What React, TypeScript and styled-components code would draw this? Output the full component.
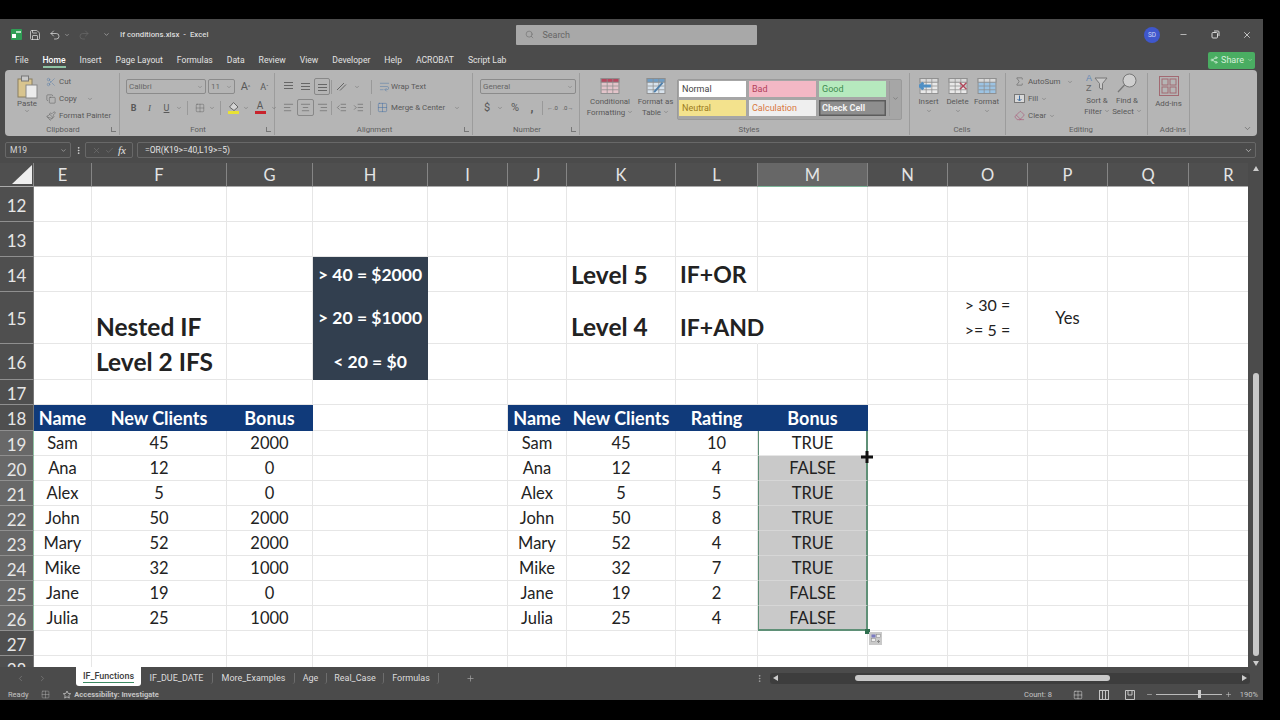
import { FC, ReactNode } from 'react';
import styled, { createGlobalStyle } from 'styled-components';
import {
  AlignCenter,
  AlignLeft,
  AlignRight,
  ChevronDown,
  ChevronLeft,
  ChevronRight,
  Check,
  Copy,
  Eraser,
  Grid2x2,
  IndentDecrease,
  IndentIncrease,
  Minus,
  MoreVertical,
  Paintbrush,
  Plus,
  Redo2,
  Save,
  Scissors,
  Search,
  Share2,
  Sigma,
  Undo2,
  WrapText,
  X,
} from 'lucide-react';

const GlobalStyle = createGlobalStyle`
  html, body {
    background: #000;
    height: 720px;
    margin: 0;
    overflow: hidden;
  }
`;

const UI_FONT = `Roboto, "Open Sans", sans-serif`;
const SHEET_FONT = `Lato, "Open Sans", sans-serif`;

const Screen = styled.div`
  background: #000;
  box-sizing: border-box;
  height: 720px;
  padding: 19px 17px 20px 0;
  width: 1280px;
`;

const Excel = styled.div`
  background: #4b4b4b;
  color: #e6e6e6;
  display: flex;
  flex-direction: column;
  font-family: ${UI_FONT};
  height: 681px;
  overflow: hidden;
  width: 1263px;
`;

/* title bar */

const TitleBar = styled.header`
  align-items: center;
  display: flex;
  flex: none;
  height: 31px;
  padding-left: 10px;
`;

const Slot = styled.span<{ $w: number; $dim?: boolean; $color?: string }>`
  align-items: center;
  color: ${({ $color, $dim }) => $color ?? ($dim ? '#6a6a6a' : 'inherit')};
  display: inline-flex;
  flex: none;
  justify-content: center;
  width: ${({ $w }) => $w}px;
`;

const DocTitle = styled.span`
  color: #dcdcdc;
  font-size: 7.8px;
  font-weight: 500;
  margin-left: 4px;
  white-space: pre;
  width: 397px;
`;

const SearchBox = styled.div`
  align-items: center;
  background: #a8a8a8;
  border-radius: 1px;
  color: #666;
  display: flex;
  font-size: 9px;
  gap: 8px;
  height: 20px;
  padding-left: 9px;
  width: 232px;
`;

const Avatar = styled.span`
  align-items: center;
  background: #3f57cc;
  border-radius: 50%;
  color: #cfd6f5;
  display: flex;
  font-size: 6.5px;
  height: 16px;
  justify-content: center;
  margin-left: 387px;
  width: 16px;
`;

const WindowButtons = styled.div`
  align-items: center;
  color: #d8d8d8;
  display: flex;
  margin-left: 8px;
`;

/* tabs */

const MenuBar = styled.nav`
  align-items: center;
  display: flex;
  flex: none;
  font-size: 8.6px;
  height: 20px;
  justify-content: space-between;
  padding: 0 8px 0 15px;
`;

const MenuItems = styled.div`
  align-items: center;
  display: flex;
  gap: 14px;
`;

const MenuItem = styled.span<{ $active?: boolean }>`
  border-bottom: 2px solid ${({ $active }) => ($active ? '#8fc3a4' : 'transparent')};
  color: ${({ $active }) => ($active ? '#fff' : '#e2e2e2')};
  font-weight: ${({ $active }) => ($active ? 500 : 400)};
  padding: 2px 0 1px;
`;

const ShareButton = styled.span`
  align-items: center;
  background: #4aad62;
  border-radius: 2px;
  color: #d6f0dc;
  display: flex;
  font-size: 9px;
  gap: 3px;
  height: 17px;
  justify-content: center;
  width: 47px;
`;

/* ribbon */

const Ribbon = styled.div`
  background: #b5b5b5;
  border-radius: 4px;
  box-sizing: border-box;
  color: #585858;
  display: flex;
  flex: none;
  font-size: 7.9px;
  height: 66px;
  margin: 0 6px 0 5px;
  padding-top: 3px;
`;

const Group = styled.section<{ $w: number }>`
  border-right: 1px solid #9c9c9c;
  box-sizing: border-box;
  display: flex;
  flex: none;
  flex-direction: column;
  height: 62px;
  width: ${({ $w }) => $w}px;
`;

const GroupBody = styled.div<{ $pad?: string; $col?: boolean }>`
  display: flex;
  flex: 1;
  flex-direction: ${({ $col }) => ($col ? 'column' : 'row')};
  gap: ${({ $col }) => ($col ? '6px' : '0')};
  min-height: 0;
  padding: ${({ $pad }) => $pad ?? '0'};
`;

const GroupFoot = styled.footer`
  align-items: center;
  color: #5e5e5e;
  display: flex;
  flex: none;
  font-size: 7.8px;
  height: 11px;
  padding: 0 1px 0 10px;
`;

const FootLabel = styled.span`
  flex: 1;
  text-align: center;
`;

const Launcher = styled.span`
  border-bottom: 1px solid #777;
  border-left: 1px solid #777;
  height: 4px;
  margin-right: 2px;
  width: 4px;
`;

const ToolRow = styled.div<{ $gap?: number }>`
  align-items: center;
  display: flex;
  gap: ${({ $gap }) => $gap ?? 0}px;
  height: 15px;
`;

const SelectBox = styled.span<{ $w: number }>`
  align-items: center;
  border: 1px solid #8b8b8b;
  border-radius: 2px;
  box-sizing: border-box;
  color: #666;
  display: flex;
  font-size: 8px;
  height: 15px;
  justify-content: space-between;
  padding: 0 2px;
  width: ${({ $w }) => $w}px;
`;

const Divider = styled.span<{ $m?: number }>`
  background: #999;
  flex: none;
  height: 14px;
  margin: 0 ${({ $m }) => $m ?? 0}px;
  width: 1px;
`;

const Active = styled.span`
  align-items: center;
  border: 1px solid #888;
  border-radius: 2px;
  display: inline-flex;
  height: 15px;
  justify-content: center;
  width: 15px;
`;

const Glyph = styled.span<{ $bold?: boolean; $italic?: boolean; $size?: number; $under?: boolean; $serif?: boolean }>`
  font-family: ${({ $serif }) => ($serif ? '"Liberation Serif", serif' : 'inherit')};
  font-size: ${({ $size }) => $size ?? 9}px;
  font-style: ${({ $italic }) => ($italic ? 'italic' : 'normal')};
  font-weight: ${({ $bold }) => ($bold ? 700 : 400)};
  text-decoration: ${({ $under }) => ($under ? 'underline' : 'none')};
`;

const ColorChip = styled.span<{ $color: string }>`
  align-items: center;
  display: inline-flex;
  flex-direction: column;
  font-size: 10px;
  line-height: 10px;
  &::after {
    background: ${({ $color }) => $color};
    content: '';
    display: block;
    height: 3px;
    width: 11px;
  }
`;

const PasteButton = styled.div`
  align-items: center;
  display: flex;
  flex: none;
  flex-direction: column;
  margin-left: 3px;
  padding-top: 2px;
  width: 38px;
`;

const SmallList = styled.div<{ $w?: number }>`
  display: flex;
  flex: none;
  flex-direction: column;
  width: ${({ $w }) => ($w ? `${$w}px` : 'auto')};
`;

const SmallItem = styled.div`
  align-items: center;
  display: flex;
  gap: 3px;
  height: 17px;
  white-space: nowrap;
`;

const BigButton = styled.div<{ $w: number }>`
  align-items: center;
  display: flex;
  flex: none;
  flex-direction: column;
  line-height: 10.5px;
  text-align: center;
  white-space: nowrap;
  width: ${({ $w }) => $w}px;
  svg.big {
    flex: none;
    margin-bottom: 3px;
  }
`;

const WideLabel = styled.span`
  align-items: center;
  display: flex;
  gap: 4px;
  margin-left: 1px;
  white-space: nowrap;
`;

const Gallery = styled.div`
  background: #a6a6a6;
  border: 1px solid #9a9a9a;
  border-radius: 2px;
  box-sizing: border-box;
  display: grid;
  flex: none;
  gap: 3px;
  grid-template-columns: 67px 67px 67px 1fr;
  grid-template-rows: 16px 16px;
  height: 41px;
  margin-top: 1px;
  padding: 1px;
  width: 225px;
`;

const StyleCell = styled.span<{ $bg: string; $fg: string; $strong?: boolean }>`
  align-items: center;
  background: ${({ $bg }) => $bg};
  box-shadow: ${({ $strong }) => ($strong ? 'inset 0 0 0 1.5px #5c5c5c' : 'none')};
  color: ${({ $fg }) => $fg};
  display: flex;
  font-size: 9px;
  font-weight: ${({ $strong }) => ($strong ? 700 : 400)};
  padding-left: 3px;
`;

const GalleryMore = styled.span`
  align-items: center;
  border-left: 1px solid #999;
  display: flex;
  grid-column: 4;
  grid-row: 1 / span 2;
  justify-content: center;
`;

const Collapse = styled.div`
  align-items: flex-end;
  display: flex;
  flex: 1;
  justify-content: flex-end;
  padding: 0 5px 3px 0;
`;

/* formula bar */

const FormulaBar = styled.div`
  align-items: center;
  display: flex;
  flex: none;
  height: 16px;
  margin-top: 6px;
  padding: 0 7px 0 5px;
`;

const NameBox = styled.span`
  align-items: center;
  border: 1px solid #686868;
  border-radius: 2px;
  box-sizing: border-box;
  color: #d4d4d4;
  display: flex;
  font-size: 8.5px;
  height: 16px;
  justify-content: space-between;
  padding: 0 3px 0 4px;
  width: 66px;
`;

const FxBox = styled.span`
  align-items: center;
  border: 1px solid #686868;
  border-radius: 2px;
  box-sizing: border-box;
  display: flex;
  gap: 4px;
  height: 16px;
  justify-content: center;
  margin-right: 4px;
  width: 48px;
`;

const FormulaInput = styled.span`
  align-items: center;
  border: 1px solid #686868;
  border-radius: 2px;
  box-sizing: border-box;
  color: #e4e4e4;
  display: flex;
  flex: 1;
  font-size: 8.5px;
  height: 16px;
  justify-content: space-between;
  padding: 0 2px 0 7px;
`;

/* sheet */

const SheetRow = styled.div`
  display: flex;
  flex: none;
  height: 504px;
  margin-top: 5px;
`;

const SheetWrap = styled.div`
  height: 504px;
  overflow: hidden;
  position: relative;
  width: 1248px;
`;

const SheetGrid = styled.div<{ $cols: string; $rows: string }>`
  display: grid;
  font-family: ${SHEET_FONT};
  grid-template-columns: ${({ $cols }) => $cols};
  grid-template-rows: ${({ $rows }) => $rows};
`;

const Corner = styled.div`
  align-items: flex-end;
  background: #4f4f4f;
  border-bottom: 1px solid #aaa;
  border-right: 1px solid #8a8a8a;
  box-sizing: border-box;
  display: flex;
  justify-content: flex-end;
  padding: 0 1px 2px 0;
`;

const ColHead = styled.div<{ $on?: boolean }>`
  align-items: center;
  background: ${({ $on }) => ($on ? '#676767' : '#4f4f4f')};
  border-bottom: ${({ $on }) => ($on ? '1px solid #7fb79b' : '1px solid #aaa')};
  border-right: 1px solid #858585;
  box-sizing: border-box;
  color: #e4e4e4;
  display: flex;
  font-family: ${SHEET_FONT};
  font-size: 16.5px;
  justify-content: center;
`;

const RowHead = styled.div<{ $on?: boolean }>`
  align-items: center;
  background: ${({ $on }) => ($on ? '#686868' : '#4f4f4f')};
  border-bottom: 1px solid #8f8f8f;
  border-right: ${({ $on }) => ($on ? '1px solid #8fc3a4' : '1px solid #777')};
  box-sizing: border-box;
  color: #e6e6e6;
  display: flex;
  font-family: ${SHEET_FONT};
  font-size: 17px;
  justify-content: center;
  padding-top: 2px;
`;

type CellKind = 'head' | 'note' | 'title' | 'caps' | 'selected' | 'selectedTop' | 'selectedEnd';

const isSelection = (kind?: CellKind) =>
  kind === 'selected' || kind === 'selectedTop' || kind === 'selectedEnd';

const cellSize = (kind?: CellKind) => {
  if (kind === 'title') return 24.5;
  if (kind === 'caps') return 23;
  if (kind === 'head') return 18;
  if (kind === 'note') return 17.5;
  return 16.5;
};

const Cell = styled.div<{
  $kind?: CellKind;
  $left?: boolean;
  $bottom?: boolean;
  $open?: boolean;
}>`
  align-items: ${({ $bottom }) => ($bottom ? 'flex-end' : 'center')};
  background: ${({ $kind }) =>
    $kind === 'head'
      ? '#103a7a'
      : $kind === 'note'
        ? '#323f4f'
        : $kind === 'selected' || $kind === 'selectedEnd'
          ? '#c9c9c9'
          : '#fff'};
  border-bottom: ${({ $kind }) => ($kind === 'selectedEnd' ? '2px' : '1px')} solid
    ${({ $kind }) =>
      $kind === 'head' || $kind === 'note'
        ? 'transparent'
        : $kind === 'selectedEnd'
          ? '#5f9077'
          : $kind === 'selected'
            ? '#d6d6d6'
            : '#e6e6e6'};
  border-left: ${({ $kind }) => (isSelection($kind) ? '1.5px solid #5f9077' : '0')};
  border-right: ${({ $kind }) => (isSelection($kind) ? '2px' : '1px')} solid
    ${({ $kind, $open }) =>
      isSelection($kind)
        ? '#5f9077'
        : $kind === 'head' || $kind === 'note' || $open
          ? 'transparent'
          : '#e6e6e6'};
  box-sizing: border-box;
  color: ${({ $kind }) => ($kind === 'head' || $kind === 'note' ? '#fff' : '#222')};
  display: flex;
  font-size: ${({ $kind }) => cellSize($kind)}px;
  font-weight: ${({ $kind }) =>
    $kind === 'head' || $kind === 'note' || $kind === 'title' || $kind === 'caps' ? 700 : 400};
  justify-content: ${({ $left }) => ($left ? 'flex-start' : 'center')};
  padding-bottom: ${({ $bottom }) => ($bottom ? '2px' : '0')};
  padding-left: ${({ $left }) => ($left ? '4px' : '0')};
  position: ${({ $open }) => ($open ? 'relative' : 'static')};
  white-space: nowrap;
  z-index: ${({ $open }) => ($open ? 1 : 'auto')};
`;

const StackedNote = styled.span`
  display: flex;
  flex-direction: column;
  font-size: 16px;
  gap: 7px;
  line-height: 18px;
`;

const FillHandle = styled.span`
  background: #2f6f4f;
  height: 5px;
  left: 865px;
  position: absolute;
  top: 466px;
  width: 5px;
`;

const CrossCursor = styled.svg`
  left: 861px;
  position: absolute;
  top: 288px;
`;

const AutofillTag = styled.span`
  align-items: center;
  background: #c9c9c9;
  display: flex;
  height: 13px;
  justify-content: center;
  left: 869px;
  position: absolute;
  top: 469px;
  width: 13px;
`;

const VScroll = styled.div`
  align-items: center;
  background: #4b4b4b;
  box-sizing: border-box;
  display: flex;
  flex-direction: column;
  height: 504px;
  justify-content: space-between;
  padding: 3px 0 1px;
  width: 15px;
`;

const VTrack = styled.div`
  display: flex;
  flex: 1;
  flex-direction: column;
  justify-content: flex-end;
  padding-bottom: 5px;
`;

const VThumb = styled.span`
  background: #c8c8c8;
  border-radius: 3px;
  display: block;
  height: 283px;
  width: 6px;
`;

const Arrow = styled.span<{ $dir: 'up' | 'down' | 'left' | 'right' }>`
  flex: none;
  height: 0;
  width: 0;
  ${({ $dir }) =>
    $dir === 'up'
      ? 'border-left:3px solid transparent;border-right:3px solid transparent;border-bottom:5px solid #ccc;'
      : $dir === 'down'
        ? 'border-left:3px solid transparent;border-right:3px solid transparent;border-top:5px solid #ccc;'
        : $dir === 'left'
          ? 'border-top:3px solid transparent;border-bottom:3px solid transparent;border-right:5px solid #ccc;'
          : 'border-top:3px solid transparent;border-bottom:3px solid transparent;border-left:5px solid #ccc;'}
`;

/* sheet tabs */

const TabBar = styled.div`
  align-items: center;
  display: flex;
  flex: none;
  font-size: 9px;
  height: 22px;
`;

const TabNav = styled.div`
  align-items: center;
  box-sizing: border-box;
  color: #7a7a7a;
  display: flex;
  gap: 13px;
  padding-left: 16px;
  width: 76px;
`;

const SheetTab = styled.span<{ $active?: boolean; $w: number }>`
  align-items: center;
  align-self: ${({ $active }) => ($active ? 'flex-start' : 'center')};
  background: ${({ $active }) => ($active ? '#fff' : 'transparent')};
  border-radius: 0 0 3px 3px;
  border-right: ${({ $active }) => ($active ? '0' : '1px solid #6d6d6d')};
  box-sizing: border-box;
  color: ${({ $active }) => ($active ? '#3c3c3c' : '#dcdcdc')};
  display: flex;
  flex: none;
  font-weight: ${({ $active }) => ($active ? 500 : 400)};
  height: ${({ $active }) => ($active ? '19px' : '11px')};
  justify-content: center;
  width: ${({ $w }) => $w}px;
`;

const TabLabel = styled.span<{ $active?: boolean }>`
  border-bottom: ${({ $active }) => ($active ? '1.5px solid #3d8a63' : '0')};
  line-height: 11px;
`;

const HScrollArea = styled.div`
  align-items: center;
  background: #3d3d3d;
  border-radius: 3px;
  box-sizing: border-box;
  display: flex;
  height: 11px;
  justify-content: space-between;
  margin-left: 5px;
  padding: 0 3px;
  width: 480px;
`;

const HThumb = styled.span`
  background: #c8c8c8;
  border-radius: 3px;
  height: 6px;
  margin-left: 77px;
  margin-right: auto;
  width: 255px;
`;

/* status bar */

const StatusBar = styled.footer`
  align-items: center;
  color: #c4c4c4;
  display: flex;
  flex: 1;
  font-size: 7.5px;
  padding: 0 5px 0 8px;
`;

const StatusStrong = styled.span`
  font-weight: 700;
`;

const StatusGap = styled.span`
  flex: 1;
`;

const SliderTrack = styled.span`
  background: #bbb;
  display: block;
  flex: none;
  height: 1px;
  margin: 0 3px;
  position: relative;
  width: 66px;
  &::after {
    background: #ccc;
    content: '';
    height: 8px;
    left: 42px;
    position: absolute;
    top: -4px;
    width: 3px;
  }
`;

const Chev: FC<{ size?: number }> = ({ size = 7 }) => <ChevronDown size={size} strokeWidth={1.6} />;

const TableIcon: FC<{ head?: string; mid?: string; x?: ReactNode }> = ({ head = '#d9d9d9', mid = '#e8e8e8', x }) => (
  <svg className="big" width="20" height="16" viewBox="0 0 20 17">
    <rect x="0.5" y="0.5" width="19" height="16" fill={mid} stroke="#8e8e8e" />
    <rect x="0.5" y="0.5" width="19" height="4" fill={head} stroke="#8e8e8e" />
    <path d="M7 1v15M13 1v15M1 8.5h18M1 12.5h18" stroke="#8e8e8e" strokeWidth="0.8" />
    {x}
  </svg>
);

const AddinsIcon = () => (
  <svg className="big" width="20" height="20" viewBox="0 0 20 20" fill="none" stroke="#a26a72">
    <rect x="0.5" y="0.5" width="19" height="19" />
    <rect x="3" y="3" width="6" height="6" />
    <rect x="11" y="3" width="6" height="6" />
    <rect x="3" y="11" width="6" height="6" />
    <rect x="11" y="11" width="6" height="6" />
  </svg>
);

const PasteIcon = () => (
  <svg width="21" height="24" viewBox="0 0 21 24">
    <rect x="1" y="4" width="14" height="18" fill="#d8c48e" stroke="#8a7f60" />
    <rect x="4.5" y="1" width="7" height="5" fill="#c9c9c9" stroke="#777" />
    <rect x="9" y="10" width="11" height="13" fill="#ececec" stroke="#888" />
  </svg>
);

const SortIcon = () => (
  <svg className="big" width="22" height="20" viewBox="0 0 22 20">
    <text x="0" y="8" fontSize="9" fill="#5f86b5" fontFamily="Liberation Sans">A</text>
    <text x="0" y="18" fontSize="9" fill="#666" fontFamily="Liberation Sans">Z</text>
    <path d="M9 5h12l-4.5 5.5v6l-3-1.5v-4.500z" fill="#c9c9c9" stroke="#777" />
  </svg>
);

const FindIcon = () => (
  <svg className="big" width="22" height="20" viewBox="0 0 22 20">
    <circle cx="13.5" cy="7.500" r="6.500" fill="#cfcfcf" stroke="#777" />
    <path d="M8.500 12L2 19" stroke="#777" strokeWidth="1.300" />
  </svg>
);

const TopLines: FC<{ at: number }> = ({ at }) => (
  <svg width="11" height="11" viewBox="0 0 11 11" stroke="#666">
    <path d={`M1 ${at}.5h9M1 ${at + 3}.5h9M1 ${at + 6}.5h9`} />
  </svg>
);

const FillBucket = () => (
  <ColorChip $color="#e8e234">
    <svg width="11" height="9" viewBox="0 0 11 9">
      <path d="M5.500 0.500L10 5 6 8.500 1.500 5z" fill="#d4d4d4" stroke="#666" />
    </svg>
  </ColorChip>
);

const COLUMNS: [string, number][] = [
  ['E', 58], ['F', 135], ['G', 86], ['H', 115], ['I', 80], ['J', 59], ['K', 109],
  ['L', 82], ['M', 110], ['N', 80], ['O', 80], ['P', 80], ['Q', 81], ['R', 80],
];

const ROWS: [number, number][] = [
  [12, 35], [13, 35], [14, 35], [15, 52], [16, 36], [17, 25], [18, 26], [19, 25], [20, 25], [21, 25],
  [22, 25], [23, 25], [24, 25], [25, 25], [26, 25], [27, 25], [28, 25],
];

const LEFT_TABLE: [string, number, number][] = [
  ['Sam', 45, 2000], ['Ana', 12, 0], ['Alex', 5, 0], ['John', 50, 2000],
  ['Mary', 52, 2000], ['Mike', 32, 1000], ['Jane', 19, 0], ['Julia', 25, 1000],
];

const RIGHT_TABLE: [string, number, number, string][] = [
  ['Sam', 45, 10, 'TRUE'], ['Ana', 12, 4, 'FALSE'], ['Alex', 5, 5, 'TRUE'], ['John', 50, 8, 'TRUE'],
  ['Mary', 52, 4, 'TRUE'], ['Mike', 32, 7, 'TRUE'], ['Jane', 19, 2, 'FALSE'], ['Julia', 25, 4, 'FALSE'],
];

interface CellData {
  content?: ReactNode;
  kind?: CellKind;
  left?: boolean;
  bottom?: boolean;
  open?: boolean;
}

const buildCells = () => {
  const cells: Record<string, CellData> = {
    H14: { content: '> 40 = $2000', kind: 'note' },
    H15: { content: '> 20 = $1000', kind: 'note' },
    H16: { content: '< 20 = $0', kind: 'note' },
    F15: { content: 'Nested IF', kind: 'title', left: true, bottom: true },
    F16: { content: 'Level 2 IFS', kind: 'title', left: true },
    K14: { content: 'Level 5', kind: 'title', left: true },
    L14: { content: 'IF+OR', kind: 'caps', left: true },
    K15: { content: 'Level 4', kind: 'title', left: true, bottom: true },
    L15: { content: 'IF+AND', kind: 'caps', left: true, bottom: true, open: true },
    O15: {
      content: (
        <StackedNote>
          <span>&gt; 30 =</span>
          <span>&gt;= 5 =</span>
        </StackedNote>
      ),
    },
    P15: { content: 'Yes' },
  };
  ['Name', 'New Clients', 'Bonus'].forEach((text, i) => {
    cells[`${'EFG'[i]}18`] = { content: text, kind: 'head' };
  });
  ['Name', 'New Clients', 'Rating', 'Bonus'].forEach((text, i) => {
    cells[`${'JKLM'[i]}18`] = { content: text, kind: 'head' };
  });
  LEFT_TABLE.forEach((row, r) => {
    row.forEach((value, i) => {
      cells[`${'EFG'[i]}${19 + r}`] = { content: value };
    });
  });
  RIGHT_TABLE.forEach((row, r) => {
    row.forEach((value, i) => {
      const kind: CellKind | undefined =
        i !== 3 ? undefined : r === 0 ? 'selectedTop' : r === 7 ? 'selectedEnd' : 'selected';
      cells[`${'JKLM'[i]}${19 + r}`] = { content: value, kind };
    });
  });
  return cells;
};

const CELLS = buildCells();

const SHEETS: [string, number][] = [
  ['IF_DUE_DATE', 72], ['More_Examples', 82], ['Age', 32], ['Real_Case', 57], ['Formulas', 55],
];

const MENU = ['File', 'Home', 'Insert', 'Page Layout', 'Formulas', 'Data', 'Review', 'View', 'Developer', 'Help', 'ACROBAT', 'Script Lab'];

const App: FC = () => (
  <Screen>
    <GlobalStyle />
    <Excel>
      <TitleBar>
        <Slot $w={12}>
          <svg width="11" height="11" viewBox="0 0 11 11">
            <rect width="11" height="11" rx="1" fill="#2f9e55" />
            <rect x="5" y="2" width="5" height="2" fill="#b7e2c4" />
            <rect x="1" y="5" width="4" height="4" fill="#fff" />
          </svg>
        </Slot>
        <Slot $w={26}><Save size={12} strokeWidth={1.4} /></Slot>
        <Slot $w={14}><Undo2 size={12} strokeWidth={1.4} /></Slot>
        <Slot $w={10}><Chev size={6} /></Slot>
        <Slot $w={24} $dim><Redo2 size={12} strokeWidth={1.4} /></Slot>
        <Slot $w={20}><Chev size={7} /></Slot>
        <DocTitle>If conditions.xlsx  -  Excel</DocTitle>
        <SearchBox>
          <Search size={9} strokeWidth={1.4} />
          Search
        </SearchBox>
        <Avatar>SD</Avatar>
        <WindowButtons>
          <Slot $w={31}><Minus size={9} /></Slot>
          <Slot $w={32}>
            <svg width="9" height="9" viewBox="0 0 9 9" fill="none" stroke="#d8d8d8">
              <rect x="1" y="2.500" width="5.500" height="5.500" rx="1" />
              <path d="M3 1h4a1 1 0 0 1 1 1v4" />
            </svg>
          </Slot>
          <Slot $w={32}><X size={10} /></Slot>
        </WindowButtons>
      </TitleBar>

      <MenuBar>
        <MenuItems>
          {MENU.map((item) => (
            <MenuItem key={item} $active={item === 'Home'}>{item}</MenuItem>
          ))}
        </MenuItems>
        <ShareButton>
          <Share2 size={8} />
          Share
          <Chev size={6} />
        </ShareButton>
      </MenuBar>

      <Ribbon>
        <Group $w={115}>
          <GroupBody>
            <PasteButton>
              <PasteIcon />
              <span>Paste</span>
              <Chev size={6} />
            </PasteButton>
            <SmallList>
              <SmallItem><Slot $w={10}><Scissors size={10} strokeWidth={1.2} color="#5a7ea8" /></Slot>Cut</SmallItem>
              <SmallItem><Slot $w={10}><Copy size={10} strokeWidth={1.2} /></Slot>Copy<Slot $w={20}><Chev size={6} /></Slot></SmallItem>
              <SmallItem><Slot $w={10}><Paintbrush size={10} strokeWidth={1.2} /></Slot>Format Painter</SmallItem>
            </SmallList>
          </GroupBody>
          <GroupFoot><FootLabel>Clipboard</FootLabel><Launcher /></GroupFoot>
        </Group>

        <Group $w={155}>
          <GroupBody $col $pad="6px 0 0 6px">
            <ToolRow $gap={2}>
              <SelectBox $w={80}>Calibri<Chev size={6} /></SelectBox>
              <SelectBox $w={27}>11<Chev size={6} /></SelectBox>
              <Slot $w={17}><Glyph $size={11}>A</Glyph><Glyph $size={6}>^</Glyph></Slot>
              <Slot $w={17}><Glyph $size={9}>A</Glyph><Glyph $size={6}>ˇ</Glyph></Slot>
            </ToolRow>
            <ToolRow>
              <Slot $w={15}><Glyph $bold>B</Glyph></Slot>
              <Slot $w={17}><Glyph $italic $serif>I</Glyph></Slot>
              <Slot $w={17}><Glyph $under>U</Glyph></Slot>
              <Slot $w={8}><Chev size={6} /></Slot>
              <Divider $m={4} />
              <Slot $w={16}><Grid2x2 size={10} strokeWidth={1} /></Slot>
              <Slot $w={8}><Chev size={6} /></Slot>
              <Divider $m={4} />
              <Slot $w={17}><FillBucket /></Slot>
              <Slot $w={8}><Chev size={6} /></Slot>
              <Slot $w={20}><ColorChip $color="#c8232c">A</ColorChip></Slot>
              <Slot $w={8}><Chev size={6} /></Slot>
            </ToolRow>
          </GroupBody>
          <GroupFoot><FootLabel>Font</FootLabel><Launcher /></GroupFoot>
        </Group>

        <Group $w={198}>
          <GroupBody $col $pad="6px 0 0 5px">
            <ToolRow>
              <Slot $w={17}><TopLines at={1} /></Slot>
              <Slot $w={17}><TopLines at={2} /></Slot>
              <Slot $w={16}><Active><TopLines at={3} /></Active></Slot>
              <Divider $m={1} />
              <Slot $w={16}>
                <svg width="11" height="11" viewBox="0 0 11 11" fill="none" stroke="#666"><path d="M1 9l7-7M4 9.500l6-6" /></svg>
              </Slot>
              <Slot $w={16}><Chev size={6} /></Slot>
              <Divider $m={6} />
              <Slot $w={12}><WrapText size={11} strokeWidth={1.2} color="#5a7ea8" /></Slot>
              <WideLabel>Wrap Text</WideLabel>
            </ToolRow>
            <ToolRow>
              <Slot $w={17}><AlignLeft size={11} strokeWidth={1.2} /></Slot>
              <Slot $w={17}><Active><AlignCenter size={11} strokeWidth={1.2} /></Active></Slot>
              <Slot $w={16}><AlignRight size={11} strokeWidth={1.2} /></Slot>
              <Divider $m={1} />
              <Slot $w={17}><IndentDecrease size={11} strokeWidth={1.2} /></Slot>
              <Slot $w={17}><IndentIncrease size={11} strokeWidth={1.2} /></Slot>
              <Divider $m={3} />
              <Slot $w={16}><Grid2x2 size={11} strokeWidth={1.2} color="#4b74a6" /></Slot>
              <WideLabel>Merge &amp; Center</WideLabel>
              <Slot $w={24}><Chev size={6} /></Slot>
            </ToolRow>
          </GroupBody>
          <GroupFoot><FootLabel>Alignment</FootLabel><Launcher /></GroupFoot>
        </Group>

        <Group $w={107}>
          <GroupBody $col $pad="6px 0 0 7px">
            <ToolRow><SelectBox $w={96}>General<Chev size={6} /></SelectBox></ToolRow>
            <ToolRow>
              <Slot $w={14}><Glyph $size={11}>$</Glyph></Slot>
              <Slot $w={12}><Chev size={6} /></Slot>
              <Slot $w={18}><Glyph $size={11}>%</Glyph></Slot>
              <Slot $w={16}><Glyph $size={12} $bold>,</Glyph></Slot>
              <Divider $m={2} />
              <Slot $w={15}><Glyph $size={6}>←.0</Glyph></Slot>
              <Slot $w={16}><Glyph $size={6}>.0→</Glyph></Slot>
            </ToolRow>
          </GroupBody>
          <GroupFoot><FootLabel>Number</FootLabel><Launcher /></GroupFoot>
        </Group>

        <Group $w={330}>
          <GroupBody $pad="5px 0 0 6px">
            <BigButton $w={48}>
              <TableIcon head="#b5485f" mid="#e3c4ca" />
              <span>Conditional<br />Formatting <Chev size={6} /></span>
            </BigButton>
            <BigButton $w={43}>
              <TableIcon head="#6f9dc4" mid="#d7e2ec" x={<path d="M8 15l9-10" stroke="#4f7faa" strokeWidth="2" />} />
              <span>Format as<br />Table <Chev size={6} /></span>
            </BigButton>
            <Gallery>
              <StyleCell $bg="#fff" $fg="#444">Normal</StyleCell>
              <StyleCell $bg="#f3b8c5" $fg="#b2405a">Bad</StyleCell>
              <StyleCell $bg="#b6e9be" $fg="#3f8b4f">Good</StyleCell>
              <GalleryMore><Chev size={7} /></GalleryMore>
              <StyleCell $bg="#f3e28d" $fg="#9c7c1e">Neutral</StyleCell>
              <StyleCell $bg="#efefef" $fg="#d9783f">Calculation</StyleCell>
              <StyleCell $bg="#8e8e8e" $fg="#f4f4f4" $strong>Check Cell</StyleCell>
            </Gallery>
          </GroupBody>
          <GroupFoot><FootLabel>Styles</FootLabel></GroupFoot>
        </Group>

        <Group $w={96}>
          <GroupBody $pad="5px 0 0 4px">
            <BigButton $w={29}>
              <TableIcon x={<path d="M0 8.500h12M4 5L0 8.500 4 12" stroke="#4f8fc4" strokeWidth="3" fill="none" />} />
              <span>Insert</span>
              <Chev size={6} />
            </BigButton>
            <BigButton $w={29}>
              <TableIcon x={<path d="M12 5l7 7M19 5l-7 7" stroke="#b0475a" strokeWidth="1.500" />} />
              <span>Delete</span>
              <Chev size={6} />
            </BigButton>
            <BigButton $w={29}>
              <TableIcon mid="#9cc3e3" />
              <span>Format</span>
              <Chev size={6} />
            </BigButton>
          </GroupBody>
          <GroupFoot><FootLabel>Cells</FootLabel></GroupFoot>
        </Group>

        <Group $w={142}>
          <GroupBody $pad="0 0 0 8px">
            <SmallList $w={68}>
              <SmallItem><Slot $w={11}><Sigma size={11} strokeWidth={1.2} /></Slot>AutoSum<Slot $w={14}><Chev size={6} /></Slot></SmallItem>
              <SmallItem><Slot $w={11}><svg width="11" height="9" viewBox="0 0 11 9"><rect x="0.500" y="0.500" width="10" height="8" fill="#d8d8d8" stroke="#777" /><path d="M5.500 1.500v5M3.500 5l2 2 2-2" fill="none" stroke="#3f6ea3" /></svg></Slot>Fill<Chev size={6} /></SmallItem>
              <SmallItem><Slot $w={11}><Eraser size={11} strokeWidth={1.2} color="#a8476e" /></Slot>Clear<Chev size={6} /></SmallItem>
            </SmallList>
            <BigButton $w={30}>
              <SortIcon />
              <span>Sort &amp;<br />Filter <Chev size={6} /></span>
            </BigButton>
            <BigButton $w={30}>
              <FindIcon />
              <span>Find &amp;<br />Select <Chev size={6} /></span>
            </BigButton>
          </GroupBody>
          <GroupFoot><FootLabel>Editing</FootLabel></GroupFoot>
        </Group>

        <Group $w={42}>
          <GroupBody $pad="3px 0 0 0">
            <BigButton $w={41}>
              <AddinsIcon />
              <span>Add-ins</span>
            </BigButton>
          </GroupBody>
          <GroupFoot><FootLabel>Add-ins</FootLabel></GroupFoot>
        </Group>

        <Collapse><Chev size={9} /></Collapse>
      </Ribbon>

      <FormulaBar>
        <NameBox>M19<Chev size={7} /></NameBox>
        <Slot $w={14}><MoreVertical size={9} /></Slot>
        <FxBox>
          <X size={9} color="#6e6e6e" />
          <Check size={9} color="#6e6e6e" />
          <Glyph $italic $serif $size={11}>fx</Glyph>
        </FxBox>
        <FormulaInput>=OR(K19&gt;=40,L19&gt;=5)<Chev size={9} /></FormulaInput>
      </FormulaBar>

      <SheetRow>
        <SheetWrap>
          <SheetGrid
            $cols={`34px ${COLUMNS.map(([, w]) => `${w}px`).join(' ')}`}
            $rows={`24px ${ROWS.map(([, h]) => `${h}px`).join(' ')}`}
          >
            <Corner>
              <svg width="20" height="19" viewBox="0 0 20 19"><path d="M20 0v19H0z" fill="#eee" /></svg>
            </Corner>
            {COLUMNS.map(([name]) => (
              <ColHead key={name} $on={name === 'M'}>{name}</ColHead>
            ))}
            {ROWS.map(([row]) => [
              <RowHead key={row} $on={row >= 19 && row <= 26}>{row}</RowHead>,
              ...COLUMNS.map(([col]) => {
                const data = CELLS[`${col}${row}`] ?? {};
                return (
                  <Cell
                    key={`${col}${row}`}
                    $kind={data.kind}
                    $left={data.left}
                    $bottom={data.bottom}
                    $open={data.open}
                  >
                    {data.content}
                  </Cell>
                );
              }),
            ])}
          </SheetGrid>
          <FillHandle />
          <CrossCursor width="12" height="12" viewBox="0 0 12 12">
            <path d="M4.500 0h3v4.500H12v3H7.500V12h-3V7.500H0v-3h4.500z" fill="#111" />
          </CrossCursor>
          <AutofillTag>
            <svg width="10" height="10" viewBox="0 0 10 10">
              <rect x="0.500" y="0.500" width="4" height="3" fill="#7a7ac0" />
              <rect x="5.500" y="0.500" width="4" height="3" fill="#eee" stroke="#888" strokeWidth="0.500" />
              <rect x="0.500" y="4.500" width="4" height="3" fill="#eee" stroke="#888" strokeWidth="0.500" />
              <path d="M7.500 6v3M6 7.500h3" stroke="#888" />
            </svg>
          </AutofillTag>
        </SheetWrap>
        <VScroll>
          <Arrow $dir="up" />
          <VTrack><VThumb /></VTrack>
          <Arrow $dir="down" />
        </VScroll>
      </SheetRow>

      <TabBar>
        <TabNav>
          <ChevronLeft size={9} />
          <ChevronRight size={9} />
        </TabNav>
        <SheetTab $active $w={65}><TabLabel $active>IF_Functions</TabLabel></SheetTab>
        {SHEETS.map(([name, w]) => (
          <SheetTab key={name} $w={w}><TabLabel>{name}</TabLabel></SheetTab>
        ))}
        <Slot $w={62} $color="#a0a0a0"><Plus size={9} /></Slot>
        <Slot $w={252}>&nbsp;</Slot>
        <Slot $w={12} $color="#aaa"><MoreVertical size={9} /></Slot>
        <HScrollArea>
          <Arrow $dir="left" />
          <HThumb />
          <Arrow $dir="right" />
        </HScrollArea>
      </TabBar>

      <StatusBar>
        <span>Ready</span>
        <Slot $w={34}><Grid2x2 size={9} strokeWidth={1} /></Slot>
        <Slot $w={10}>
          <svg width="10" height="10" viewBox="0 0 10 10" fill="none" stroke="#c4c4c4" strokeWidth="0.800">
            <path d="M5 1l1.100 2.400 2.600.3-1.900 1.800.5 2.600L5 6.800 2.700 8.100l.5-2.600L1.300 3.700l2.600-.3z" />
          </svg>
        </Slot>
        <StatusStrong>&nbsp;Accessibility: Investigate</StatusStrong>
        <StatusGap />
        <span>Count: 8</span>
        <Slot $w={13}>&nbsp;</Slot>
        <Slot $w={26}><Grid2x2 size={10} strokeWidth={1.2} color="#ddd" /></Slot>
        <Slot $w={26}>
          <svg width="10" height="10" viewBox="0 0 10 10" fill="none" stroke="#c4c4c4"><rect x="0.500" y="0.500" width="9" height="9" /><path d="M3.500 1v8M6.500 1v8" /></svg>
        </Slot>
        <Slot $w={26}>
          <svg width="10" height="10" viewBox="0 0 10 10" fill="none" stroke="#c4c4c4"><path d="M0.500 9.500v-9h9v9zM3 1v4h4V1" /></svg>
        </Slot>
        <Slot $w={3}>&nbsp;</Slot>
        <Minus size={7} />
        <SliderTrack />
        <Plus size={7} />
        <Slot $w={8}>&nbsp;</Slot>
        <span>190%</span>
      </StatusBar>
    </Excel>
  </Screen>
);

export default App;
